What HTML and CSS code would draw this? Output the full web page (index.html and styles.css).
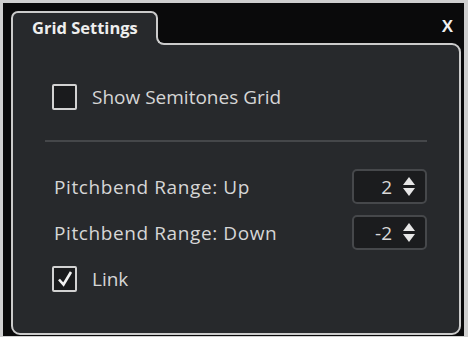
FILE: index.html
```html
<!DOCTYPE html>
<html lang="en">
<head>
  <meta charset="UTF-8">
  <title>Grid Settings</title>
  <link rel="stylesheet" href="styles.css">
</head>
<body>

<div class="window">
  <div class="header">
    <div class="tab">Grid Settings</div>
    <div class="close">X</div>
  </div>

  <div class="panel">
    <label class="check-row first">
      <span class="box"></span>
      <span>Show Semitones Grid</span>
    </label>

    <div class="divider"></div>

    <div class="field">
      <span class="label">Pitchbend Range: Up</span>
      <div class="spin">
        <span class="value">2</span>
        <span class="arrows"><i class="up"></i><i class="down"></i></span>
      </div>
    </div>

    <div class="field">
      <span class="label">Pitchbend Range: Down</span>
      <div class="spin">
        <span class="value">-2</span>
        <span class="arrows"><i class="up"></i><i class="down"></i></span>
      </div>
    </div>

    <label class="check-row link">
      <span class="box">
        <svg width="18" height="18" viewBox="0 0 18 18">
          <path d="M3 9.5 L7.5 14.5 L15 2" fill="none" stroke="#f2f2f2" stroke-width="2.6"/>
        </svg>
      </span>
      <span>Link</span>
    </label>
  </div>
</div>

</body>
</html>
```

FILE: styles.css
```css
body {
  margin: 0;
  background-color: #cfcfcf;
  font-family: "Open Sans", Arial, sans-serif;
  color: #d6d6d6;
}

.window {
  margin: 3px 4px 0 3px;
  height: 333px;
  box-sizing: border-box;
  padding: 8px 3px 0 8px;
  background-color: #0a0a0b;
}

.header {
  display: flex;
  justify-content: space-between;
  align-items: center;
  position: relative;
  z-index: 1;
  margin-bottom: -2px;
}

.tab {
  position: relative;
  width: 124px;
  height: 32px;
  padding-left: 19px;
  border: 2px solid #cbcbcb;
  border-bottom: none;
  border-radius: 7px 7px 0 0;
  background-color: #27292c;
  color: #eeeeee;
  font-size: 16.5px;
  font-weight: bold;
  line-height: 30px;
}

.tab::before,
.tab::after {
  content: "";
  position: absolute;
  left: 100%;
  bottom: 0;
  width: 10px;
  height: 10px;
  box-sizing: border-box;
}

.tab::before {
  background-color: #27292c;
}

.tab::after {
  border-left: 2px solid #cbcbcb;
  border-bottom: 2px solid #cbcbcb;
  border-bottom-left-radius: 8px;
  background-color: #0a0a0b;
}

.close {
  margin-right: 8px;
  margin-top: -2px;
  color: #f0f0f0;
  font-family: "Liberation Sans", Arial, sans-serif;
  font-size: 17px;
  font-weight: bold;
}

.panel {
  height: 292px;
  box-sizing: border-box;
  padding: 39px 32px 0 32px;
  border: 2px solid #cbcbcb;
  border-radius: 0 9px 9px 9px;
  background-color: #27292c;
  font-size: 19px;
  line-height: 24px;
}

.check-row {
  display: flex;
  align-items: center;
  gap: 15px;
  margin-left: 7px;
}

.check-row.link {
  margin-top: 16px;
}

.box {
  display: flex;
  align-items: center;
  justify-content: center;
  width: 25px;
  height: 26px;
  box-sizing: border-box;
  border: 2.5px solid #d2d2d2;
  border-radius: 2px;
  background-color: #1a1b1d;
}

.divider {
  height: 2px;
  margin: 30px 0 27px 0;
  background-color: #45474a;
}

.field {
  display: flex;
  justify-content: space-between;
  align-items: center;
  margin-bottom: 11px;
  padding-left: 9px;
}

.label {
  letter-spacing: 0.6px;
}

.spin {
  display: flex;
  align-items: center;
  justify-content: flex-end;
  width: 75px;
  height: 35px;
  box-sizing: border-box;
  padding-right: 10px;
  border: 2px solid #46484b;
  border-radius: 5px;
  background-color: #1b1c1e;
  color: #d8d8d8;
}

.value {
  margin-right: 11px;
}

.arrows {
  display: flex;
  flex-direction: column;
  gap: 3px;
}

.arrows i {
  width: 0;
  height: 0;
  border-left: 6.5px solid transparent;
  border-right: 6.5px solid transparent;
}

.arrows .up {
  border-bottom: 8px solid #e6e6e6;
}

.arrows .down {
  border-top: 8px solid #e6e6e6;
}
```
